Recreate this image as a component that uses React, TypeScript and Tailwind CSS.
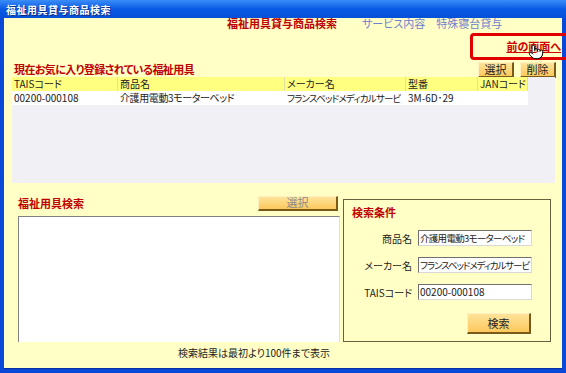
import { Pointer } from 'lucide-react'

const font = { fontFamily: '"Noto Sans CJK JP", "Liberation Sans", sans-serif' }

function OrangeButton({ label, className }: { label: string; className: string }) {
  return (
    <div
      className={`flex items-center justify-center bg-gradient-to-b from-[#ffe39a] to-[#fcc85a] border-r-2 border-b-2 border-[#7a5a1a] border-t border-l border-t-[#fff0c0] border-l-[#fff0c0] text-[11px] text-[#222] ${className}`}
    >
      {label}
    </div>
  )
}

const columns = [
  { name: 'TAISコード', w: 'w-[106px]', value: '00200-000108', t: 'text-[10px]' },
  { name: '商品名', w: 'w-[167px]', value: '介護用電動3モーターベッド', t: 'text-[10px] tracking-[-0.4px]' },
  { name: 'メーカー名', w: 'w-[121px]', value: 'フランスベッドメディカルサービ', t: 'text-[9.5px] tracking-[-0.8px]' },
  { name: '型番', w: 'w-[72px]', value: '3M-6D･29', t: 'text-[10px]' },
  { name: 'JANコード', w: 'w-[50px]', value: '', t: 'text-[10px]' },
]

const fields = [
  { label: '商品名', value: '介護用電動3モーターベッド', mt: 'mt-[12px]', t: 'text-[9.5px] tracking-[-0.7px]' },
  { label: 'メーカー名', value: 'フランスベッドメディカルサービ', mt: 'mt-[11px]', t: 'text-[9.5px] tracking-[-1.1px]' },
  { label: 'TAISコード', value: '00200-000108', mt: 'mt-[11px]', t: 'text-[10px]' },
]

export default function App() {
  return (
    <div style={font} className="relative w-[566px] h-[373px] flex flex-col bg-[#0a48d8] overflow-hidden [font-feature-settings:'palt']">
      <div className="h-[18px] flex items-center pl-[6px] bg-gradient-to-b from-[#3a8cf6] via-[#0a5ae6] to-[#0650d8]">
        <span className="text-[10px] font-bold text-white tracking-[0.5px] [text-shadow:1px_1px_0_#0a2a80]">福祉用具貸与商品検索</span>
      </div>
      <div className="flex-1 mx-[4px] mb-[4px] bg-[#ffffc6] flex flex-col border-b border-[#0a2ea0]">
        <div className="h-[11px] flex items-end pl-[223px] gap-[25px]">
          <span className="text-[11px] font-bold text-[#c00000] leading-none">福祉用具貸与商品検索</span>
          <span className="text-[11px] text-[#7080d0] leading-none">サービス内容　特殊寝台貸与</span>
        </div>
        <div className="h-[33px] flex items-center justify-end pr-[1px]">
          <span className="text-[11px] font-bold text-[#d00000] underline leading-none mt-[2px]">前の画面へ</span>
        </div>
        <div className="h-[15px] flex items-center pl-[10px]">
          <span className="text-[11px] font-bold text-[#c00000] leading-none tracking-[-0.6px]">現在お気に入り登録されている福祉用具</span>
          <div className="ml-auto flex gap-[6px] pr-[6px]">
            <OrangeButton label="選択" className="w-[36px] h-[16px]" />
            <OrangeButton label="削除" className="w-[36px] h-[16px]" />
          </div>
        </div>
        <div className="ml-[8px] mr-[7px] h-[106px] bg-[#f1f1f5] flex flex-col">
          <div className="flex h-[14px] bg-[#ffff80] w-[516px]">
            {columns.map((c) => (
              <div key={c.name} className={`${c.w} border-r border-[#e0e0a0] pl-[2px] text-[10px] text-[#222] leading-[14px]`}>
                {c.name}
              </div>
            ))}
          </div>
          <div className="flex h-[14px] bg-white w-[516px]">
            {columns.map((c) => (
              <div key={c.name} className={`${c.w} ${c.t} pl-[2px] text-[#222] leading-[14px] whitespace-nowrap overflow-hidden`}>
                {c.value}
              </div>
            ))}
          </div>
        </div>
        <div className="flex mt-[12px] pl-[14px]">
          <div className="flex flex-col w-[322px]">
            <div className="flex items-center h-[16px]">
              <span className="text-[11px] font-bold text-[#c00000] leading-none">福祉用具検索</span>
              <OrangeButton label="選択" className="ml-auto mr-[2px] w-[80px] h-[15px] !text-[#8a8a8a]" />
            </div>
            <div className="mt-[5px] h-[126px] bg-white border-t border-l border-[#808080] border-r border-r-[#e0e0e0]" />
            <div className="mt-[3px] text-right pr-[10px] text-[10px] text-[#222]">検索結果は最初より100件まで表示</div>
          </div>
          <div className="ml-[3px] mt-[4px] w-[208px] h-[143px] border border-[#6a6040] flex flex-col pl-[8px]">
            <span className="mt-[7px] text-[11px] font-bold text-[#c00000] leading-none">検索条件</span>
            {fields.map((f) => (
              <div key={f.label} className={`flex items-center ${f.mt}`}>
                <span className="w-[60px] text-right text-[10px] text-[#222]">{f.label}</span>
                <div className={`ml-[6px] w-[114px] h-[16px] bg-white border-t border-l border-[#707070] border-b border-r border-b-[#d8d8d8] border-r-[#d8d8d8] pl-[1px] ${f.t} leading-[14px] text-[#222] whitespace-nowrap overflow-hidden`}>
                  {f.value}
                </div>
              </div>
            ))}
            <OrangeButton label="検索" className="mt-[13px] ml-[115px] w-[64px] h-[21px]" />
          </div>
        </div>
      </div>
      <div className="absolute left-[470px] top-[33px] w-[100px] h-[27px] border-[3px] border-[#e00000] rounded-[4px]" />
      <Pointer className="absolute left-[528px] top-[44px]" size={16} fill="white" strokeWidth={1.5} color="black" />
    </div>
  )
}
